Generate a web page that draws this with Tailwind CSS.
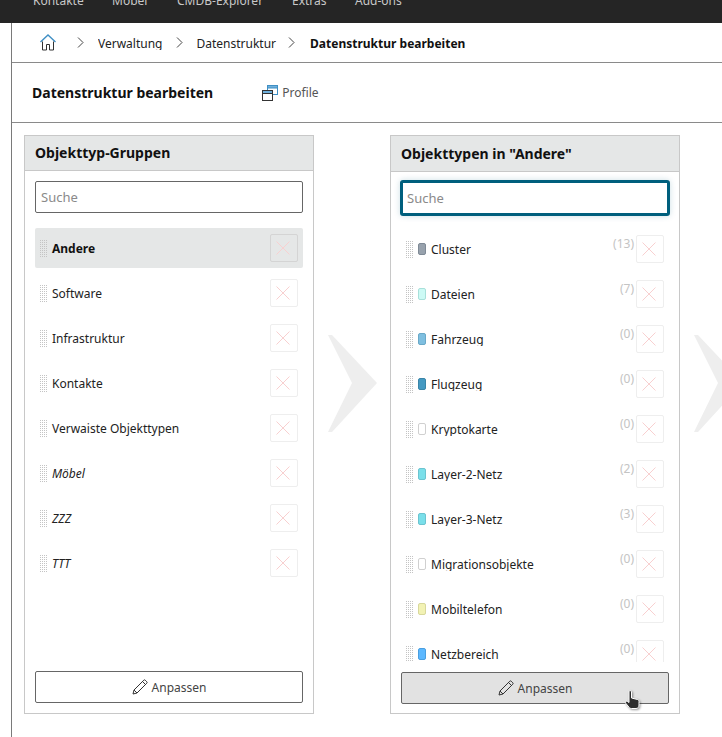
<!doctype html>
<html lang="de">
<head>
<meta charset="UTF-8" />
<title>Datenstruktur bearbeiten</title>
<script src="https://cdn.jsdelivr.net/npm/@tailwindcss/browser@4"></script>
</head>
<body class="h-[737px] w-[722px] overflow-hidden bg-white font-['Noto_Sans',sans-serif] text-[12px] text-[#222]">
<svg class="absolute h-0 w-0">
  <symbol id="grip" viewBox="0 0 8 17">
    <path d="M0.500 0V17M2.500 0V17M4.500 0V17M6.500 0V17" fill="none" stroke="#c4c4c4" stroke-width="1" stroke-dasharray="1 1" />
  </symbol>
  <symbol id="cross" viewBox="0 0 14 14">
    <path d="M0.500 0.500 13.500 13.500M13.500 0.500 0.500 13.500" fill="none" stroke="#f8d0d0" stroke-width="1" />
  </symbol>
  <symbol id="pencil" viewBox="0 0 16 16">
    <path d="M1 15 2 11 11.800 1.200a1 1 0 0 1 1.400 0l1.600 1.600a1 1 0 0 1 0 1.400L5 14ZM2 11 5 14M10.500 2.500 13.500 5.500" fill="none" stroke="#333" stroke-width="1" />
  </symbol>
  <symbol id="chevron" viewBox="0 0 49 98">
    <polygon points="0,0 4,0 49,48 4,97 0,97 24,48" fill="#eeeeee" />
  </symbol>
</svg>

<!-- top navigation, scrolled up so only the lower part of the labels shows -->
<nav class="flex h-[23px] items-end overflow-hidden bg-[#252525] pb-[14px] pl-[33px] leading-[16px] text-[#c8c8c8]">
  <span class="w-[79px] shrink-0">Kontakte</span>
  <span class="w-[65px] shrink-0">Möbel</span>
  <span class="w-[115px] shrink-0">CMDB-Explorer</span>
  <span class="w-[63px] shrink-0">Extras</span>
  <span class="shrink-0">Add-ons</span>
</nav>

<main class="ml-[11px] h-[714px] border-l border-[#7a7a7a]">
  <div class="flex h-[40px] items-center border-b border-[#8a8a8a] pl-[28px]">
    <svg class="h-[17px] w-[16px]" viewBox="0 0 16 17" fill="none">
      <path d="M0.500 8 8 1l7.500 7" stroke="#3f8fc4" stroke-width="1.400" />
      <path d="M2.500 7.500V16H6.500V10.500H9.500V16H13.500V7.500" stroke="#333" stroke-width="1" />
    </svg>
    <svg class="ml-[21px] h-[11px] w-[7px]" viewBox="0 0 7 11" fill="none"><path d="M1 0.500 6 5.500 1 10.500" stroke="#444" /></svg>
    <span class="ml-[14px] mt-[1px] h-[14px] overflow-hidden leading-[16px]">Verwaltung</span>
    <svg class="ml-[13px] h-[11px] w-[7px]" viewBox="0 0 7 11" fill="none"><path d="M1 0.500 6 5.500 1 10.500" stroke="#444" /></svg>
    <span class="ml-[14px] mt-[2px] leading-[16px]">Datenstruktur</span>
    <svg class="ml-[12px] h-[11px] w-[7px]" viewBox="0 0 7 11" fill="none"><path d="M1 0.500 6 5.500 1 10.500" stroke="#444" /></svg>
    <span class="ml-[15px] mt-[2px] font-bold leading-[16px] text-[#111]">Datenstruktur bearbeiten</span>
  </div>

  <div class="flex h-[60px] items-center border-b border-[#8a8a8a] pl-[20px]">
    <h1 class="text-[14px] font-bold text-[#111]">Datenstruktur bearbeiten</h1>
    <svg class="ml-[49px] h-[16px] w-[16px]" viewBox="0 0 16 16" fill="none">
      <rect x="5.500" y="0.500" width="10" height="9" fill="#fff" stroke="#3f8fc4" />
      <rect x="5.500" y="0.500" width="10" height="2.500" fill="#6fb0dc" stroke="#3f8fc4" />
      <rect x="0.500" y="5.500" width="10" height="10" fill="#fff" stroke="#333" />
      <rect x="0.500" y="5.500" width="10" height="3" fill="#6fb0dc" stroke="#333" />
    </svg>
    <span class="ml-[4px] text-[#555]">Profile</span>
  </div>

  <div class="flex pl-[12px] pt-[12px]">
    <!-- Objekttyp-Gruppen -->
    <section class="flex h-[579px] w-[290px] shrink-0 flex-col border border-[#c8c8c8]">
      <h2 class="flex h-[35px] shrink-0 items-center border-b border-[#c8c8c8] bg-[#e5e7e7] pb-[2px] pl-[10px] text-[14px] font-bold text-[#111]">Objekttyp-Gruppen</h2>
      <div class="mx-[10px] mt-[10px] flex h-[32px] shrink-0 items-center rounded-[2px] border border-[#666] pl-[5px] pt-[2px] text-[13px] text-[#8a8a8a]">Suche</div>
      <ul class="mx-[10px] mt-[15px] flex-1">
        <li class="flex h-[40px] items-center rounded-[2px] bg-[#e5e7e7] pl-[5px] pr-[5px] font-bold text-[#111]">
          <svg class="h-[17px] w-[8px] shrink-0"><use href="#grip" /></svg>
          <span class="ml-[4px] mt-[2px] flex-1">Andere</span>
          <span class="flex h-[28px] w-[28px] items-center justify-center rounded-[2px] border border-[#d4d4d4]"><svg class="h-[14px] w-[14px] -translate-x-px"><use href="#cross" /></svg></span>
        </li>
        <li class="mt-[5px] flex h-[40px] items-center pl-[5px] pr-[5px]">
          <svg class="h-[17px] w-[8px] shrink-0"><use href="#grip" /></svg>
          <span class="ml-[4px] mt-[2px] flex-1">Software</span>
          <span class="flex h-[28px] w-[28px] items-center justify-center rounded-[2px] border border-[#eeeeee]"><svg class="h-[14px] w-[14px] -translate-x-px"><use href="#cross" /></svg></span>
        </li>
        <li class="mt-[5px] flex h-[40px] items-center pl-[5px] pr-[5px]">
          <svg class="h-[17px] w-[8px] shrink-0"><use href="#grip" /></svg>
          <span class="ml-[4px] mt-[2px] flex-1">Infrastruktur</span>
          <span class="flex h-[28px] w-[28px] items-center justify-center rounded-[2px] border border-[#eeeeee]"><svg class="h-[14px] w-[14px] -translate-x-px"><use href="#cross" /></svg></span>
        </li>
        <li class="mt-[5px] flex h-[40px] items-center pl-[5px] pr-[5px]">
          <svg class="h-[17px] w-[8px] shrink-0"><use href="#grip" /></svg>
          <span class="ml-[4px] mt-[2px] flex-1">Kontakte</span>
          <span class="flex h-[28px] w-[28px] items-center justify-center rounded-[2px] border border-[#eeeeee]"><svg class="h-[14px] w-[14px] -translate-x-px"><use href="#cross" /></svg></span>
        </li>
        <li class="mt-[5px] flex h-[40px] items-center pl-[5px] pr-[5px]">
          <svg class="h-[17px] w-[8px] shrink-0"><use href="#grip" /></svg>
          <span class="ml-[4px] mt-[2px] flex-1">Verwaiste Objekttypen</span>
          <span class="flex h-[28px] w-[28px] items-center justify-center rounded-[2px] border border-[#eeeeee]"><svg class="h-[14px] w-[14px] -translate-x-px"><use href="#cross" /></svg></span>
        </li>
        <li class="mt-[5px] flex h-[40px] items-center pl-[5px] pr-[5px]">
          <svg class="h-[17px] w-[8px] shrink-0"><use href="#grip" /></svg>
          <span class="ml-[4px] mt-[2px] flex-1 italic">Möbel</span>
          <span class="flex h-[28px] w-[28px] items-center justify-center rounded-[2px] border border-[#eeeeee]"><svg class="h-[14px] w-[14px] -translate-x-px"><use href="#cross" /></svg></span>
        </li>
        <li class="mt-[5px] flex h-[40px] items-center pl-[5px] pr-[5px]">
          <svg class="h-[17px] w-[8px] shrink-0"><use href="#grip" /></svg>
          <span class="ml-[4px] mt-[2px] flex-1 italic">ZZZ</span>
          <span class="flex h-[28px] w-[28px] items-center justify-center rounded-[2px] border border-[#eeeeee]"><svg class="h-[14px] w-[14px] -translate-x-px"><use href="#cross" /></svg></span>
        </li>
        <li class="mt-[5px] flex h-[40px] items-center pl-[5px] pr-[5px]">
          <svg class="h-[17px] w-[8px] shrink-0"><use href="#grip" /></svg>
          <span class="ml-[4px] mt-[2px] flex-1 italic">TTT</span>
          <span class="flex h-[28px] w-[28px] items-center justify-center rounded-[2px] border border-[#eeeeee]"><svg class="h-[14px] w-[14px] -translate-x-px"><use href="#cross" /></svg></span>
        </li>
      </ul>
      <button class="mx-[10px] mb-[10px] flex h-[32px] shrink-0 items-center justify-center gap-[4px] rounded-[2px] border border-[#666] bg-white text-[#444]">
        <svg class="h-[16px] w-[16px]"><use href="#pencil" /></svg><span class="mt-[2px]">Anpassen</span>
      </button>
    </section>

    <div class="w-[76px] shrink-0 pl-[14px] pt-[200px]"><svg class="h-[98px] w-[49px]"><use href="#chevron" /></svg></div>

    <!-- Objekttypen in "Andere" -->
    <section class="relative flex h-[579px] w-[290px] shrink-0 flex-col border border-[#c8c8c8]">
      <h2 class="flex h-[36px] shrink-0 items-center border-b border-[#c8c8c8] bg-[#e5e7e7] pl-[10px] text-[14px] font-bold text-[#111]">Objekttypen in "Andere"</h2>
      <div class="mx-[9px] mt-[8px] flex h-[36px] shrink-0 items-center rounded-[3px] border-[3px] border-[#005f7d] pl-[4px] pt-[2px] text-[13px] text-[#8a8a8a] shadow-[0_0_6px_rgba(0,95,125,0.2)]">Suche</div>
      <ul class="mx-[10px] mt-[13px] h-[433px] shrink-0 overflow-hidden">
        <li class="flex h-[40px] items-center pl-[5px] pr-[5px]">
          <svg class="h-[17px] w-[8px] shrink-0"><use href="#grip" /></svg>
          <span class="ml-[4px] h-[12px] w-[8px] shrink-0 rounded-[2px] border border-[#7f8a96] bg-[#98a2ad]"></span>
          <span class="ml-[5px] h-[14px] flex-1 overflow-hidden leading-[16px]">Cluster</span>
          <span class="mr-[2px] -translate-y-[5px] text-[#c4c4c4]">(13)</span>
          <span class="flex h-[28px] w-[28px] items-center justify-center rounded-[2px] border border-[#eeeeee]"><svg class="h-[14px] w-[14px] -translate-x-px"><use href="#cross" /></svg></span>
        </li>
        <li class="mt-[5px] flex h-[40px] items-center pl-[5px] pr-[5px]">
          <svg class="h-[17px] w-[8px] shrink-0"><use href="#grip" /></svg>
          <span class="ml-[4px] h-[12px] w-[8px] shrink-0 rounded-[2px] border border-[#a8e0da] bg-[#ccfaf5]"></span>
          <span class="ml-[5px] h-[14px] flex-1 overflow-hidden leading-[16px]">Dateien</span>
          <span class="mr-[2px] -translate-y-[5px] text-[#c4c4c4]">(7)</span>
          <span class="flex h-[28px] w-[28px] items-center justify-center rounded-[2px] border border-[#eeeeee]"><svg class="h-[14px] w-[14px] -translate-x-px"><use href="#cross" /></svg></span>
        </li>
        <li class="mt-[5px] flex h-[40px] items-center pl-[5px] pr-[5px]">
          <svg class="h-[17px] w-[8px] shrink-0"><use href="#grip" /></svg>
          <span class="ml-[4px] h-[12px] w-[8px] shrink-0 rounded-[2px] border border-[#6aa9c8] bg-[#7fbfe0]"></span>
          <span class="ml-[5px] h-[14px] flex-1 overflow-hidden leading-[16px]">Fahrzeug</span>
          <span class="mr-[2px] -translate-y-[5px] text-[#c4c4c4]">(0)</span>
          <span class="flex h-[28px] w-[28px] items-center justify-center rounded-[2px] border border-[#eeeeee]"><svg class="h-[14px] w-[14px] -translate-x-px"><use href="#cross" /></svg></span>
        </li>
        <li class="mt-[5px] flex h-[40px] items-center pl-[5px] pr-[5px]">
          <svg class="h-[17px] w-[8px] shrink-0"><use href="#grip" /></svg>
          <span class="ml-[4px] h-[12px] w-[8px] shrink-0 rounded-[2px] border border-[#3a85a8] bg-[#4499c2]"></span>
          <span class="ml-[5px] h-[14px] flex-1 overflow-hidden leading-[16px]">Flugzeug</span>
          <span class="mr-[2px] -translate-y-[5px] text-[#c4c4c4]">(0)</span>
          <span class="flex h-[28px] w-[28px] items-center justify-center rounded-[2px] border border-[#eeeeee]"><svg class="h-[14px] w-[14px] -translate-x-px"><use href="#cross" /></svg></span>
        </li>
        <li class="mt-[5px] flex h-[40px] items-center pl-[5px] pr-[5px]">
          <svg class="h-[17px] w-[8px] shrink-0"><use href="#grip" /></svg>
          <span class="ml-[4px] h-[12px] w-[8px] shrink-0 rounded-[2px] border border-[#d0d0d0] bg-white"></span>
          <span class="ml-[5px] h-[14px] flex-1 overflow-hidden leading-[16px]">Kryptokarte</span>
          <span class="mr-[2px] -translate-y-[5px] text-[#c4c4c4]">(0)</span>
          <span class="flex h-[28px] w-[28px] items-center justify-center rounded-[2px] border border-[#eeeeee]"><svg class="h-[14px] w-[14px] -translate-x-px"><use href="#cross" /></svg></span>
        </li>
        <li class="mt-[5px] flex h-[40px] items-center pl-[5px] pr-[5px]">
          <svg class="h-[17px] w-[8px] shrink-0"><use href="#grip" /></svg>
          <span class="ml-[4px] h-[12px] w-[8px] shrink-0 rounded-[2px] border border-[#6cc4d0] bg-[#7adfea]"></span>
          <span class="ml-[5px] h-[14px] flex-1 overflow-hidden leading-[16px]">Layer-2-Netz</span>
          <span class="mr-[2px] -translate-y-[5px] text-[#c4c4c4]">(2)</span>
          <span class="flex h-[28px] w-[28px] items-center justify-center rounded-[2px] border border-[#eeeeee]"><svg class="h-[14px] w-[14px] -translate-x-px"><use href="#cross" /></svg></span>
        </li>
        <li class="mt-[5px] flex h-[40px] items-center pl-[5px] pr-[5px]">
          <svg class="h-[17px] w-[8px] shrink-0"><use href="#grip" /></svg>
          <span class="ml-[4px] h-[12px] w-[8px] shrink-0 rounded-[2px] border border-[#6cc4d0] bg-[#7adfea]"></span>
          <span class="ml-[5px] h-[14px] flex-1 overflow-hidden leading-[16px]">Layer-3-Netz</span>
          <span class="mr-[2px] -translate-y-[5px] text-[#c4c4c4]">(3)</span>
          <span class="flex h-[28px] w-[28px] items-center justify-center rounded-[2px] border border-[#eeeeee]"><svg class="h-[14px] w-[14px] -translate-x-px"><use href="#cross" /></svg></span>
        </li>
        <li class="mt-[5px] flex h-[40px] items-center pl-[5px] pr-[5px]">
          <svg class="h-[17px] w-[8px] shrink-0"><use href="#grip" /></svg>
          <span class="ml-[4px] h-[12px] w-[8px] shrink-0 rounded-[2px] border border-[#d0d0d0] bg-white"></span>
          <span class="ml-[5px] h-[14px] flex-1 overflow-hidden leading-[16px]">Migrationsobjekte</span>
          <span class="mr-[2px] -translate-y-[5px] text-[#c4c4c4]">(0)</span>
          <span class="flex h-[28px] w-[28px] items-center justify-center rounded-[2px] border border-[#eeeeee]"><svg class="h-[14px] w-[14px] -translate-x-px"><use href="#cross" /></svg></span>
        </li>
        <li class="mt-[5px] flex h-[40px] items-center pl-[5px] pr-[5px]">
          <svg class="h-[17px] w-[8px] shrink-0"><use href="#grip" /></svg>
          <span class="ml-[4px] h-[12px] w-[8px] shrink-0 rounded-[2px] border border-[#d8d89c] bg-[#f2f2b4]"></span>
          <span class="ml-[5px] h-[14px] flex-1 overflow-hidden leading-[16px]">Mobiltelefon</span>
          <span class="mr-[2px] -translate-y-[5px] text-[#c4c4c4]">(0)</span>
          <span class="flex h-[28px] w-[28px] items-center justify-center rounded-[2px] border border-[#eeeeee]"><svg class="h-[14px] w-[14px] -translate-x-px"><use href="#cross" /></svg></span>
        </li>
        <li class="mt-[5px] flex h-[40px] items-center pl-[5px] pr-[5px]">
          <svg class="h-[17px] w-[8px] shrink-0"><use href="#grip" /></svg>
          <span class="ml-[4px] h-[12px] w-[8px] shrink-0 rounded-[2px] border border-[#4a9fe0] bg-[#5cb8ff]"></span>
          <span class="ml-[5px] h-[14px] flex-1 overflow-hidden leading-[16px]">Netzbereich</span>
          <span class="mr-[2px] -translate-y-[5px] text-[#c4c4c4]">(0)</span>
          <span class="flex h-[28px] w-[28px] items-center justify-center rounded-[2px] border border-[#eeeeee]"><svg class="h-[14px] w-[14px] -translate-x-px"><use href="#cross" /></svg></span>
        </li>
      </ul>
      <button class="mx-[10px] mt-[10px] flex h-[32px] shrink-0 items-center justify-center gap-[4px] rounded-[2px] border border-[#666] bg-[#e2e2e2] text-[#444]">
        <svg class="h-[16px] w-[16px]"><use href="#pencil" /></svg><span class="mt-[2px]">Anpassen</span>
      </button>
      <!-- mouse pointer -->
      <svg class="absolute left-[233px] top-[554px] h-[20px] w-[17px] drop-shadow-[1px_1px_1px_rgba(0,0,0,0.4)]" viewBox="0 0 17 20">
        <path d="M5 1.500c0-1 2.500-1 2.500 0V8l6 1.500c1 .3 1.500 1 1.500 2V15c0 2-1 3.500-3 3.500H7.500c-1.500 0-2.500-1-3.500-2.500L1.500 13c-.8-1.200.7-2.500 2-1.500L5 12.500Z" fill="#2e2e2e" stroke="#fff" stroke-width="1" />
      </svg>
    </section>

    <div class="w-[76px] shrink-0 pl-[14px] pt-[200px]"><svg class="h-[98px] w-[49px]"><use href="#chevron" /></svg></div>
  </div>
</main>
</body>
</html>
